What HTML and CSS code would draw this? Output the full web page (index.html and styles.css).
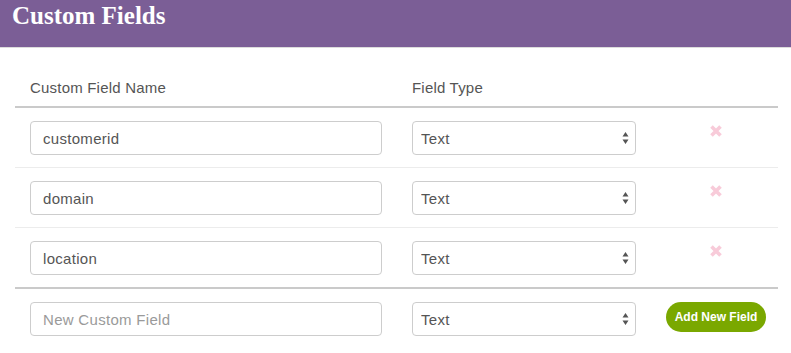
FILE: index.html
```html
<!DOCTYPE html>
<html lang="en">
<head>
<meta charset="utf-8">
<title>Custom Fields</title>
<link rel="stylesheet" href="styles.css">
</head>
<body>
<header class="page-header">
  <h1 class="title">Custom Fields</h1>
</header>
<table class="fields">
  <colgroup>
    <col class="col-name">
    <col class="col-type">
    <col class="col-action">
  </colgroup>
  <thead>
    <tr>
      <th>Custom Field Name</th>
      <th>Field Type</th>
      <th></th>
    </tr>
  </thead>
  <tbody>
    <tr>
      <td><input class="text-input" type="text" value="customerid"></td>
      <td><span class="select-wrap"><select class="select"><option>Text</option></select><svg class="select-arrows" width="7" height="12" viewBox="0 0 7 12"><path d="M3.5 0 L6.5 4.5 H0.5 Z M3.5 12 L6.5 7.5 H0.5 Z" fill="#555"/></svg></span></td>
      <td class="action"><svg class="remove" width="12" height="12" viewBox="0 0 12 12"><path d="M1.5 1.5 L10.5 10.5 M10.5 1.5 L1.5 10.5" stroke="#f8cbd9" stroke-width="3.6"/></svg></td>
    </tr>
    <tr>
      <td><input class="text-input" type="text" value="domain"></td>
      <td><span class="select-wrap"><select class="select"><option>Text</option></select><svg class="select-arrows" width="7" height="12" viewBox="0 0 7 12"><path d="M3.5 0 L6.5 4.5 H0.5 Z M3.5 12 L6.5 7.5 H0.5 Z" fill="#555"/></svg></span></td>
      <td class="action"><svg class="remove" width="12" height="12" viewBox="0 0 12 12"><path d="M1.5 1.5 L10.5 10.5 M10.5 1.5 L1.5 10.5" stroke="#f8cbd9" stroke-width="3.6"/></svg></td>
    </tr>
    <tr>
      <td><input class="text-input" type="text" value="location"></td>
      <td><span class="select-wrap"><select class="select"><option>Text</option></select><svg class="select-arrows" width="7" height="12" viewBox="0 0 7 12"><path d="M3.5 0 L6.5 4.5 H0.5 Z M3.5 12 L6.5 7.5 H0.5 Z" fill="#555"/></svg></span></td>
      <td class="action"><svg class="remove" width="12" height="12" viewBox="0 0 12 12"><path d="M1.5 1.5 L10.5 10.5 M10.5 1.5 L1.5 10.5" stroke="#f8cbd9" stroke-width="3.6"/></svg></td>
    </tr>
  </tbody>
  <tfoot>
    <tr>
      <td><input class="text-input" type="text" placeholder="New Custom Field"></td>
      <td><span class="select-wrap"><select class="select"><option>Text</option></select><svg class="select-arrows" width="7" height="12" viewBox="0 0 7 12"><path d="M3.5 0 L6.5 4.5 H0.5 Z M3.5 12 L6.5 7.5 H0.5 Z" fill="#555"/></svg></span></td>
      <td class="action"><button class="add-btn" type="button">Add New Field</button></td>
    </tr>
  </tfoot>
</table>
</body>
</html>
```

FILE: styles.css
```css
* { box-sizing: border-box; }

body {
  margin: 0;
  background: #fff;
  font-family: "Liberation Sans", Arial, sans-serif;
  color: #555;
}

.page-header {
  background: #7b5e96;
  height: 48px;
  padding: 1px 12px 0;
  border-bottom: 1px solid #dcdcdc;
}

.title {
  margin: 0;
  font-family: "Liberation Serif", "Times New Roman", serif;
  font-weight: bold;
  font-size: 25px;
  line-height: 30px;
  color: #fff;
}

.fields {
  margin: 22px 0 0 15px;
  width: 763px;
  border-collapse: collapse;
  table-layout: fixed;
}

.col-name { width: 382px; }
.col-type { width: 254px; }
.col-action { width: 127px; }

.fields th {
  text-align: left;
  font-weight: normal;
  font-size: 15px;
  letter-spacing: 0.2px;
  line-height: 20px;
  color: #555;
  padding: 8px 15px;
  border-bottom: 2px solid #cacaca;
}

.fields td {
  padding: 13px 15px 12px;
  vertical-align: top;
}

.fields tbody tr + tr td {
  border-top: 1px solid #ececec;
}

.fields tfoot td {
  border-top: 2px solid #cacaca;
}

.fields td.action {
  text-align: center;
  padding-right: 12px;
}

.text-input {
  display: block;
  width: 100%;
  height: 34px;
  padding: 0 12px;
  border: 1px solid #cdcdcd;
  border-radius: 4px;
  font-family: "Liberation Sans", Arial, sans-serif;
  font-size: 15px;
  letter-spacing: 0.3px;
  color: #555;
  background: #fff;
  outline: none;
}

.text-input::placeholder {
  color: #9a9a9a;
}

.select-wrap {
  position: relative;
  display: block;
  width: 224px;
}

.select {
  display: block;
  width: 100%;
  height: 34px;
  padding: 0 8px;
  border: 1px solid #cdcdcd;
  border-radius: 4px;
  background: #fff;
  font-family: "Liberation Sans", Arial, sans-serif;
  font-size: 15px;
  letter-spacing: 0.3px;
  color: #555;
  appearance: none;
  -webkit-appearance: none;
  outline: none;
}

.select-arrows {
  position: absolute;
  right: 7px;
  top: 11px;
}

.remove {
  display: inline-block;
  margin-top: 4px;
  vertical-align: top;
}

.add-btn {
  display: inline-block;
  width: 100px;
  height: 30px;
  padding: 0;
  border: none;
  border-radius: 15px;
  background: #7aa800;
  color: #fff;
  font-family: "Liberation Sans", Arial, sans-serif;
  font-weight: bold;
  font-size: 12px;
  line-height: 30px;
  cursor: pointer;
}
```
